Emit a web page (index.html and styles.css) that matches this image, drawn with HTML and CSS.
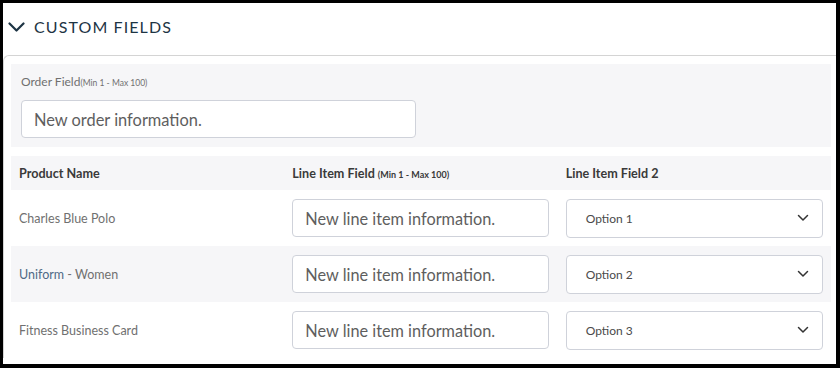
FILE: index.html
```html
<!DOCTYPE html>
<html lang="en">
<head>
    <meta charset="UTF-8">
    <meta name="viewport" content="width=device-width, initial-scale=1.0">
    <title>Custom Fields</title>
    <link rel="stylesheet" href="styles.css">
</head>
<body>
    <div class="panel">
        <div class="panel-head">
            <svg class="toggle" width="17" height="11" viewBox="0 0 17 11">
                <path d="M1.5 1.5 L8.5 8.5 L15.5 1.5" fill="none" stroke="#1d3444" stroke-width="2.2" stroke-linecap="round" stroke-linejoin="round"/>
            </svg>
            <h2>CUSTOM FIELDS</h2>
        </div>

        <div class="panel-body">
            <div class="order-field">
                <label>Order Field<small>(Min 1 - Max 100)</small></label>
                <input type="text" class="order-input" placeholder="New order information.">
            </div>

            <div class="line-items">
                <div class="li-row li-head">
                    <div class="cell">Product Name</div>
                    <div class="cell">Line Item Field <small>(Min 1 - Max 100)</small></div>
                    <div class="cell">Line Item Field 2</div>
                </div>

                <div class="li-row">
                    <div class="cell name">Charles Blue Polo</div>
                    <div class="cell"><input type="text" class="line-input" placeholder="New line item information."></div>
                    <div class="cell">
                        <div class="select"><span>Option 1</span>
                            <svg width="12" height="8" viewBox="0 0 12 8"><path d="M1.5 1.5 L6 6 L10.5 1.5" fill="none" stroke="#333" stroke-width="1.5" stroke-linecap="round" stroke-linejoin="round"/></svg>
                        </div>
                    </div>
                </div>

                <div class="li-row alt">
                    <div class="cell name"><a href="#">Uniform</a> - Women</div>
                    <div class="cell"><input type="text" class="line-input" placeholder="New line item information."></div>
                    <div class="cell">
                        <div class="select"><span>Option 2</span>
                            <svg width="12" height="8" viewBox="0 0 12 8"><path d="M1.5 1.5 L6 6 L10.5 1.5" fill="none" stroke="#333" stroke-width="1.5" stroke-linecap="round" stroke-linejoin="round"/></svg>
                        </div>
                    </div>
                </div>

                <div class="li-row">
                    <div class="cell name">Fitness Business Card</div>
                    <div class="cell"><input type="text" class="line-input" placeholder="New line item information."></div>
                    <div class="cell">
                        <div class="select"><span>Option 3</span>
                            <svg width="12" height="8" viewBox="0 0 12 8"><path d="M1.5 1.5 L6 6 L10.5 1.5" fill="none" stroke="#333" stroke-width="1.5" stroke-linecap="round" stroke-linejoin="round"/></svg>
                        </div>
                    </div>
                </div>
            </div>
        </div>
    </div>
</body>
</html>
```

FILE: styles.css
```css
:root {
    --title: #1d3444;
    --muted: #707070;
    --stripe: #f6f6f8;
    --border: #cfd2da;
}

body {
    font-family: 'Lato', sans-serif;
    margin: 0;
    background: #000;
    color: #333;
}

.panel {
    background: #fff;
    margin: 3px 4px 4px 3px;
    height: 361px;
    overflow: hidden;
}

.panel-head {
    height: 48px;
    padding: 0 0 4px 5px;
    display: flex;
    align-items: center;
    gap: 9px;
}

.panel-head .toggle {
    margin-top: 1px;
}

.panel-head h2 {
    margin: 0;
    font-size: 16px;
    line-height: 20px;
    font-weight: 400;
    letter-spacing: 1.1px;
    color: var(--title);
}

.panel-body {
    border-top: 1px solid #d4d4d4;
    border-left: 1px solid #d4d4d4;
    border-top-left-radius: 6px;
    padding: 8px 5px 0 7px;
}

.order-field {
    background: var(--stripe);
    padding: 10px 10px 9px;
}

.order-field label {
    display: block;
    height: 15px;
    font-size: 12px;
    line-height: 15px;
    color: var(--muted);
    margin-bottom: 11px;
}

.order-field label small {
    font-size: 8.5px;
    line-height: 1;
}

input {
    font-family: inherit;
    box-sizing: border-box;
    border: 1px solid var(--border);
    border-radius: 4px;
    background: #fff;
    outline: none;
    display: block;
}

input::placeholder {
    color: #5e5e5e;
}

.order-input {
    width: 395px;
    height: 38px;
    padding: 0 12px;
    font-size: 16.4px;
}

.line-items {
    margin-top: 9px;
}

.li-row {
    display: grid;
    grid-template-columns: repeat(3, 1fr);
    height: 56px;
    align-items: center;
}

.li-row.alt,
.li-row.li-head {
    background: var(--stripe);
}

.li-row.li-head {
    height: 34px;
    font-size: 12.6px;
    font-weight: 700;
    color: #3a3a3a;
}

.li-head small {
    font-size: 9px;
    line-height: 1;
}

.cell {
    padding: 0 8px;
}

.cell.name {
    font-size: 12.5px;
    color: var(--muted);
}

.cell.name a {
    color: #4f6a86;
    text-decoration: none;
}

.line-input {
    width: 257px;
    height: 38px;
    padding: 0 12px;
    font-size: 16.3px;
}

.select {
    width: 257px;
    height: 39px;
    box-sizing: border-box;
    border: 1px solid var(--border);
    border-radius: 4px;
    background: #fff;
    display: flex;
    align-items: center;
    justify-content: space-between;
    padding: 0 13px 0 19px;
    font-size: 12px;
    color: #4a4a4a;
}
```
